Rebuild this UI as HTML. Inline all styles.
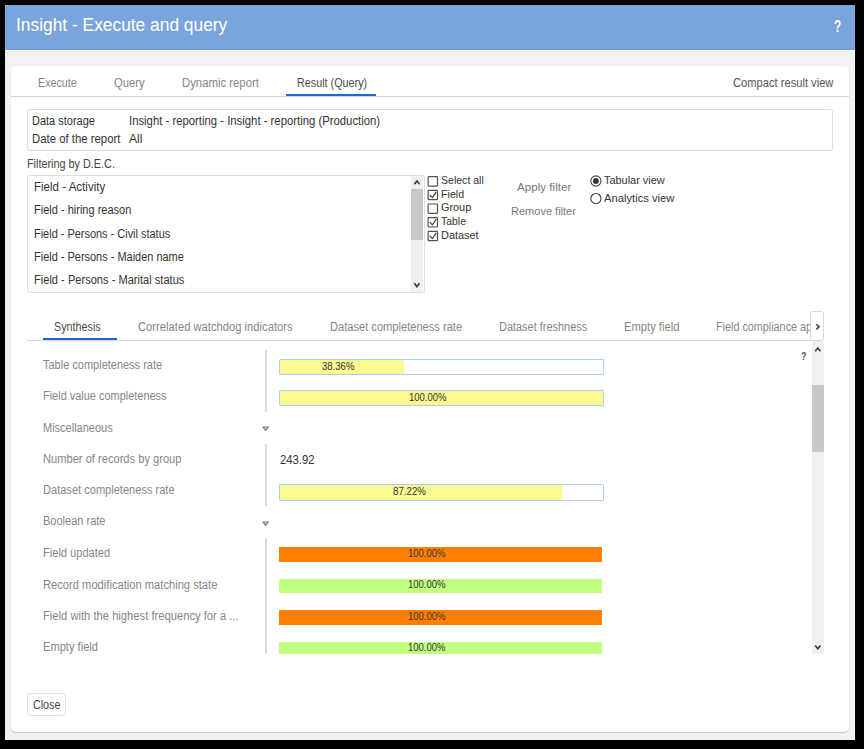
<!DOCTYPE html>
<html><head><meta charset="utf-8">
<style>
*{margin:0;padding:0;box-sizing:border-box}
html,body{width:864px;height:749px;overflow:hidden;background:#000}
body{font-family:"Liberation Sans",sans-serif;position:relative}
.a{position:absolute;white-space:nowrap}
.b{position:absolute}
</style></head><body>
<div class="b" style="left:5px;top:5px;width:850px;height:735px;background:#f2f2f2"></div>
<div class="b" style="left:5px;top:5px;width:850px;height:45px;background:#7aa5dc"></div>
<div class="b" style="left:854px;top:50px;width:1px;height:690px;background:#fbfbfb"></div>
<div class="b" style="left:5px;top:49px;width:849px;height:1px;background:#6f9bd8"></div>
<div class="b" style="left:5px;top:50px;width:849px;height:1px;background:#f7f6f3"></div>
<div class="b" style="left:11px;top:66px;width:838px;height:666px;background:#fff;border-radius:5px;box-shadow:0 1px 1px #c8c8c8"></div>
<div class="a" style="left:833.8px;top:19.1px;font-size:16px;line-height:16px;color:#fff;font-weight:bold;transform:scaleX(0.74);transform-origin:0 0">?</div>
<!-- tabs -->
<div class="b" style="left:11px;top:96px;width:838px;height:1px;background:#d6d6d6"></div>
<div class="b" style="left:286px;top:94px;width:90px;height:2px;background:#2066d0"></div>
<!-- data storage -->
<div class="b" style="left:27px;top:109px;width:806px;height:42px;border:1px solid #dedede;border-radius:3px"></div>
<!-- list -->
<div class="b" style="left:27px;top:175px;width:398px;height:118px;border:1px solid #dedede;border-radius:3px"></div>
<div class="b" style="left:411px;top:176px;width:12px;height:116px;background:#f0f0f0"></div>
<div class="b" style="left:411px;top:189px;width:12px;height:51px;background:#c8c8c8"></div>
<!-- tabs2 -->
<div class="b" style="left:27px;top:340px;width:784px;height:1px;background:#d6d6d6"></div>
<div class="b" style="left:43px;top:338px;width:74px;height:2px;background:#2066d0"></div>
<div class="b" style="left:810px;top:311px;width:14px;height:30px;border:1px solid #d8d8d8;border-radius:3px;background:#fff"></div>
<!-- scroll -->
<div class="b" style="left:812px;top:341px;width:12px;height:313px;background:#f0f0f0"></div>
<div class="b" style="left:812px;top:385px;width:12px;height:67px;background:#c8c8c8"></div>
<!-- separators -->
<div class="b" style="left:265px;top:350px;width:2px;height:62px;background:#dcdcdc"></div>
<div class="b" style="left:265px;top:444px;width:2px;height:62px;background:#dcdcdc"></div>
<div class="b" style="left:265px;top:538px;width:2px;height:116px;background:#dcdcdc"></div>
<!-- bars -->
<div class="b" style="left:279px;top:359px;width:325px;height:16px;border:1px solid #a8d0fa;border-radius:1px;background:linear-gradient(90deg,#fafa8e 0,#fafa8e 124px,#fff 124px)"></div>
<div class="b" style="left:279px;top:390px;width:325px;height:16px;border:1px solid #a8d0fa;border-radius:1px;background:#fafa8e"></div>
<div class="b" style="left:279px;top:484px;width:325px;height:17px;border:1px solid #a8d0fa;border-radius:1px;background:linear-gradient(90deg,#fafa8e 0,#fafa8e 282px,#fff 282px)"></div>
<div class="b" style="left:279px;top:547px;width:323px;height:15px;background:#ff8000"></div>
<div class="b" style="left:279px;top:579px;width:323px;height:14px;background:#c0ff80"></div>
<div class="b" style="left:279px;top:610px;width:323px;height:15px;background:#ff8000"></div>
<div class="b" style="left:279px;top:642px;width:323px;height:12px;background:#c0ff80"></div>
<!-- close -->
<div class="b" style="left:27px;top:693px;width:39px;height:23px;border:1px solid #e0e0e0;border-radius:4px"></div>
<!-- checkboxes -->
<svg class="b" style="left:0;top:0" width="864" height="749" viewBox="0 0 864 749">
 <g fill="none" stroke="#505050" stroke-width="1.2">
  <rect x="428.1" y="176.7" width="9.4" height="9.4" rx="0.8"></rect>
  <rect x="428.1" y="190.3" width="9.4" height="9.4" rx="0.8"></rect>
  <rect x="428.1" y="204.0" width="9.4" height="9.4" rx="0.8"></rect>
  <rect x="428.1" y="217.6" width="9.4" height="9.4" rx="0.8"></rect>
  <rect x="428.1" y="231.3" width="9.4" height="9.4" rx="0.8"></rect>
 </g>
 <g fill="none" stroke="#404040" stroke-width="1.2">
  <path d="M429.8 194.8 L432.3 197.6 L436.3 191.9"></path>
  <path d="M429.8 222.1 L432.3 224.9 L436.3 219.2"></path>
  <path d="M429.8 235.8 L432.3 238.6 L436.3 232.9"></path>
 </g>
 <!-- radios -->
 <circle cx="595.9" cy="181" r="5.1" fill="none" stroke="#404040" stroke-width="1.1"></circle>
 <circle cx="595.9" cy="181" r="2.9" fill="#333"></circle>
 <circle cx="595.9" cy="198.6" r="5.1" fill="none" stroke="#404040" stroke-width="1.1"></circle>
 <!-- chevrons -->
 <g fill="none" stroke="#3a3a3a" stroke-width="1.6">
  <path d="M414.3 184.3 L416.9 181 L419.5 184.3"></path>
  <path d="M414.3 283.3 L416.9 286.6 L419.5 283.3"></path>
  <path d="M815.2 351.3 L817.8 348 L820.4 351.3"></path>
  <path d="M815.2 645.5 L817.8 648.8 L820.4 645.5"></path>
  <path d="M816.4 324.2 L819 326.8 L816.4 329.4"></path>
 </g>
 <!-- triangles -->
 <path d="M262.9 427 L268.5 427 L265.7 430.3 Z" fill="#d0d0d0" stroke="#7a7a7a" stroke-width="1.1" stroke-linejoin="round"></path>
 <path d="M262.9 522 L268.5 522 L265.7 525.3 Z" fill="#d0d0d0" stroke="#7a7a7a" stroke-width="1.1" stroke-linejoin="round"></path>
</svg>
<div class="a" style="left:801.3px;top:351px;font-size:11px;line-height:11px;color:#555;font-weight:bold;transform:scaleX(0.8);transform-origin:0 0">?</div>
<div class="b" style="left:716px;top:318px;width:94px;height:16px;overflow:hidden"><div class="a" style="left:0;top:2.6px;font-size:12px;line-height:12px;color:#868686;transform:scaleX(0.90);transform-origin:0 0">Field compliance applied</div></div>

<div class="a" style="left: 16.4px; top: 16.16px; font-size: 18px; line-height: 18px; color: rgb(255, 255, 255); transform: scaleX(0.9642); transform-origin: 0px 0px;">Insight - Execute and query</div>
<div class="a" style="left: 37.7px; top: 76.64px; font-size: 12px; line-height: 12px; color: rgb(134, 134, 134); transform: scaleX(0.8925); transform-origin: 0px 0px;">Execute</div>
<div class="a" style="left: 114.2px; top: 76.64px; font-size: 12px; line-height: 12px; color: rgb(134, 134, 134); transform: scaleX(0.9361); transform-origin: 0px 0px;">Query</div>
<div class="a" style="left: 182.2px; top: 76.64px; font-size: 12px; line-height: 12px; color: rgb(134, 134, 134); transform: scaleX(0.9452); transform-origin: 0px 0px;">Dynamic report</div>
<div class="a" style="left: 296.6px; top: 76.64px; font-size: 12px; line-height: 12px; color: rgb(77, 77, 77); transform: scaleX(0.8996); transform-origin: 0px 0px;">Result (Query)</div>
<div class="a" style="left: 733.2px; top: 76.64px; font-size: 12px; line-height: 12px; color: rgb(85, 85, 85); transform: scaleX(0.9292); transform-origin: 0px 0px;">Compact result view</div>
<div class="a" style="left: 31.9px; top: 114.64px; font-size: 12px; line-height: 12px; color: rgb(51, 51, 51); transform: scaleX(0.9153); transform-origin: 0px 0px;">Data storage</div>
<div class="a" style="left: 128.6px; top: 114.64px; font-size: 12px; line-height: 12px; color: rgb(51, 51, 51); transform: scaleX(0.9435); transform-origin: 0px 0px;">Insight - reporting - Insight - reporting (Production)</div>
<div class="a" style="left: 31.9px; top: 133.14px; font-size: 12px; line-height: 12px; color: rgb(51, 51, 51); transform: scaleX(0.9466); transform-origin: 0px 0px;">Date of the report</div>
<div class="a" style="left: 128.6px; top: 133.14px; font-size: 12px; line-height: 12px; color: rgb(51, 51, 51); transform: scaleX(1.0117); transform-origin: 0px 0px;">All</div>
<div class="a" style="left: 26.6px; top: 158.14px; font-size: 12px; line-height: 12px; color: rgb(68, 68, 68); transform: scaleX(0.9028); transform-origin: 0px 0px;">Filtering by D.E.C.</div>
<div class="a" style="left: 34.2px; top: 181.09px; font-size: 12px; line-height: 12px; color: rgb(51, 51, 51); transform: scaleX(0.962); transform-origin: 0px 0px;">Field - Activity</div>
<div class="a" style="left: 34.2px; top: 204.24px; font-size: 12px; line-height: 12px; color: rgb(51, 51, 51); transform: scaleX(0.9174); transform-origin: 0px 0px;">Field - hiring reason</div>
<div class="a" style="left: 34.2px; top: 227.54px; font-size: 12px; line-height: 12px; color: rgb(51, 51, 51); transform: scaleX(0.9118); transform-origin: 0px 0px;">Field - Persons - Civil status</div>
<div class="a" style="left: 34.2px; top: 250.84px; font-size: 12px; line-height: 12px; color: rgb(51, 51, 51); transform: scaleX(0.913); transform-origin: 0px 0px;">Field - Persons - Maiden name</div>
<div class="a" style="left: 34.2px; top: 274.44px; font-size: 12px; line-height: 12px; color: rgb(51, 51, 51); transform: scaleX(0.9243); transform-origin: 0px 0px;">Field - Persons - Marital status</div>
<div class="a" style="left: 441.4px; top: 175.39px; font-size: 11px; line-height: 11px; color: rgb(51, 51, 51); transform: scaleX(0.9588); transform-origin: 0px 0px;">Select all</div>
<div class="a" style="left: 441.4px; top: 188.79px; font-size: 11px; line-height: 11px; color: rgb(51, 51, 51); transform: scaleX(0.9688); transform-origin: 0px 0px;">Field</div>
<div class="a" style="left: 441.4px; top: 202.19px; font-size: 11px; line-height: 11px; color: rgb(51, 51, 51); transform: scaleX(0.9876); transform-origin: 0px 0px;">Group</div>
<div class="a" style="left: 441.4px; top: 216.09px; font-size: 11px; line-height: 11px; color: rgb(51, 51, 51); transform: scaleX(0.9507); transform-origin: 0px 0px;">Table</div>
<div class="a" style="left: 441.4px; top: 229.69px; font-size: 11px; line-height: 11px; color: rgb(51, 51, 51); transform: scaleX(0.9915); transform-origin: 0px 0px;">Dataset</div>
<div class="a" style="left: 516.5px; top: 181.99px; font-size: 11px; line-height: 11px; color: rgb(119, 119, 119); transform: scaleX(1.0573); transform-origin: 0px 0px;">Apply filter</div>
<div class="a" style="left: 511.4px; top: 205.79px; font-size: 11px; line-height: 11px; color: rgb(119, 119, 119); transform: scaleX(1.0016); transform-origin: 0px 0px;">Remove filter</div>
<div class="a" style="left: 603.8px; top: 175.39px; font-size: 11px; line-height: 11px; color: rgb(51, 51, 51); transform: scaleX(0.9928); transform-origin: 0px 0px;">Tabular view</div>
<div class="a" style="left: 603.8px; top: 193.19px; font-size: 11px; line-height: 11px; color: rgb(51, 51, 51); transform: scaleX(1.0191); transform-origin: 0px 0px;">Analytics view</div>
<div class="a" style="left: 53.6px; top: 320.64px; font-size: 12px; line-height: 12px; color: rgb(77, 77, 77); transform: scaleX(0.8975); transform-origin: 0px 0px;">Synthesis</div>
<div class="a" style="left: 137.5px; top: 320.64px; font-size: 12px; line-height: 12px; color: rgb(134, 134, 134); transform: scaleX(0.9346); transform-origin: 0px 0px;">Correlated watchdog indicators</div>
<div class="a" style="left: 329.6px; top: 320.64px; font-size: 12px; line-height: 12px; color: rgb(134, 134, 134); transform: scaleX(0.9254); transform-origin: 0px 0px;">Dataset completeness rate</div>
<div class="a" style="left: 498.8px; top: 320.64px; font-size: 12px; line-height: 12px; color: rgb(134, 134, 134); transform: scaleX(0.9119); transform-origin: 0px 0px;">Dataset freshness</div>
<div class="a" style="left: 623.8px; top: 320.64px; font-size: 12px; line-height: 12px; color: rgb(134, 134, 134); transform: scaleX(0.9333); transform-origin: 0px 0px;">Empty field</div>
<div class="a" style="left: 43.1px; top: 358.84px; font-size: 12px; line-height: 12px; color: rgb(134, 134, 134); transform: scaleX(0.9156); transform-origin: 0px 0px;">Table completeness rate</div>
<div class="a" style="left: 43.1px; top: 390.14px; font-size: 12px; line-height: 12px; color: rgb(134, 134, 134); transform: scaleX(0.9121); transform-origin: 0px 0px;">Field value completeness</div>
<div class="a" style="left: 43.1px; top: 421.74px; font-size: 12px; line-height: 12px; color: rgb(134, 134, 134); transform: scaleX(0.9165); transform-origin: 0px 0px;">Miscellaneous</div>
<div class="a" style="left: 43.1px; top: 452.64px; font-size: 12px; line-height: 12px; color: rgb(134, 134, 134); transform: scaleX(0.927); transform-origin: 0px 0px;">Number of records by group</div>
<div class="a" style="left: 43.1px; top: 483.84px; font-size: 12px; line-height: 12px; color: rgb(134, 134, 134); transform: scaleX(0.9219); transform-origin: 0px 0px;">Dataset completeness rate</div>
<div class="a" style="left: 43.1px; top: 515.14px; font-size: 12px; line-height: 12px; color: rgb(134, 134, 134); transform: scaleX(0.9183); transform-origin: 0px 0px;">Boolean rate</div>
<div class="a" style="left: 43.1px; top: 546.74px; font-size: 12px; line-height: 12px; color: rgb(134, 134, 134); transform: scaleX(0.9239); transform-origin: 0px 0px;">Field updated</div>
<div class="a" style="left: 43.1px; top: 578.59px; font-size: 12px; line-height: 12px; color: rgb(134, 134, 134); transform: scaleX(0.9304); transform-origin: 0px 0px;">Record modification matching state</div>
<div class="a" style="left: 43.1px; top: 609.84px; font-size: 12px; line-height: 12px; color: rgb(134, 134, 134); transform: scaleX(0.9339); transform-origin: 0px 0px;">Field with the highest frequency for a ...</div>
<div class="a" style="left: 43.1px; top: 641.09px; font-size: 12px; line-height: 12px; color: rgb(134, 134, 134); transform: scaleX(0.9266); transform-origin: 0px 0px;">Empty field</div>
<div class="a" style="left: 279.6px; top: 453.59px; font-size: 12px; line-height: 12px; color: rgb(51, 51, 51); transform: scaleX(0.9427); transform-origin: 0px 0px;">243.92</div>
<div class="a" style="left: 322px; top: 361.74px; font-size: 10px; line-height: 10px; color: rgb(51, 51, 51); transform: scaleX(0.9551); transform-origin: 0px 0px;">38.36%</div>
<div class="a" style="left: 409.2px; top: 393.14px; font-size: 10px; line-height: 10px; color: rgb(51, 51, 51); transform: scaleX(0.9497); transform-origin: 0px 0px;">100.00%</div>
<div class="a" style="left: 392.5px; top: 487.14px; font-size: 10px; line-height: 10px; color: rgb(51, 51, 51); transform: scaleX(0.9699); transform-origin: 0px 0px;">87.22%</div>
<div class="a" style="left: 408.4px; top: 548.93px; font-size: 10px; line-height: 10px; color: rgb(51, 51, 51); transform: scaleX(0.9497); transform-origin: 0px 0px;">100.00%</div>
<div class="a" style="left: 408.4px; top: 580.43px; font-size: 10px; line-height: 10px; color: rgb(51, 51, 51); transform: scaleX(0.9497); transform-origin: 0px 0px;">100.00%</div>
<div class="a" style="left: 408.4px; top: 611.83px; font-size: 10px; line-height: 10px; color: rgb(51, 51, 51); transform: scaleX(0.9497); transform-origin: 0px 0px;">100.00%</div>
<div class="a" style="left: 408.4px; top: 643.24px; font-size: 10px; line-height: 10px; color: rgb(51, 51, 51); transform: scaleX(0.9497); transform-origin: 0px 0px;">100.00%</div>
<div class="a" style="left: 32.5px; top: 698.94px; font-size: 12px; line-height: 12px; color: rgb(68, 68, 68); transform: scaleX(0.8929); transform-origin: 0px 0px;">Close</div>
</body></html>
